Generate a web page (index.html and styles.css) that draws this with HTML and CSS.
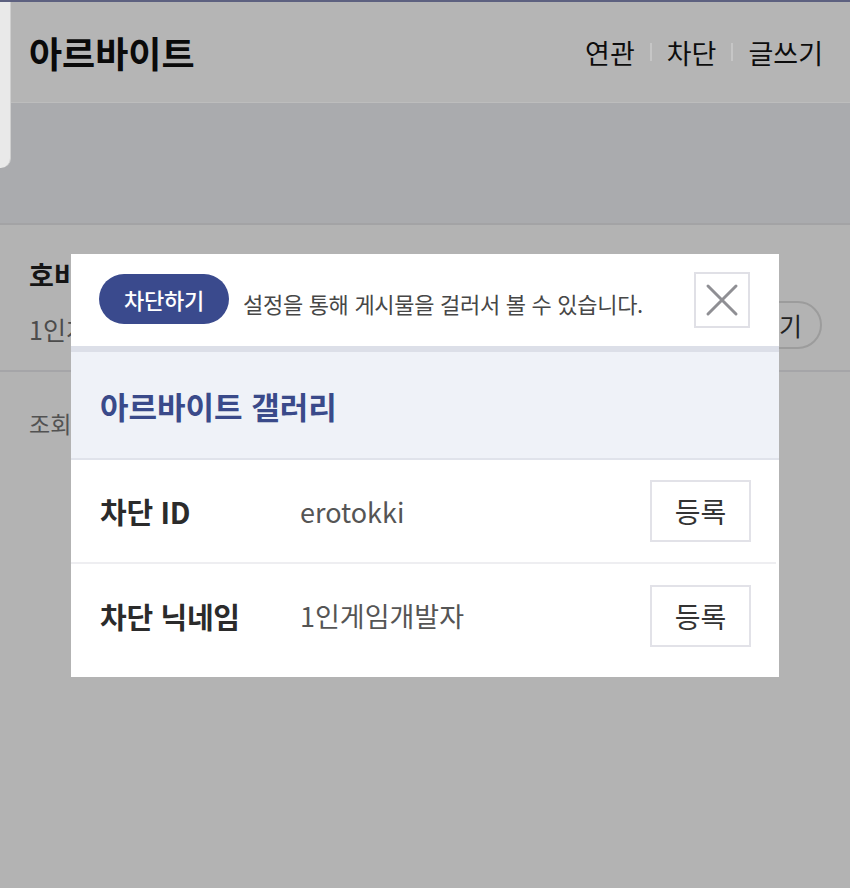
FILE: index.html
```html
<!DOCTYPE html>
<html lang="ko">
<head>
<meta charset="utf-8">
<link rel="stylesheet" href="styles.css">
</head>
<body>
<div class="page">
  <div class="topline"></div>
  <header class="appbar">
    <h1 class="title">아르바이트</h1>
    <nav class="nav">
      <span>연관</span><i class="sep"></i><span>차단</span><i class="sep"></i><span>글쓰기</span>
    </nav>
  </header>
  <div class="band"></div>
  <section class="post">
    <div class="post-head">
      <div class="post-info">
        <div class="post-title">호비 게임 만드는 중</div>
        <div class="post-writer">1인게임개발자</div>
      </div>
      <span class="post-btn">구독하기</span>
    </div>
  </section>
  <div class="post-meta">조회 123</div>
  <div class="sidepanel"></div>

  <div class="modal">
    <div class="modal-head">
      <span class="badge">차단하기</span>
      <span class="desc">설정을 통해 게시물을 걸러서 볼 수 있습니다.</span>
      <button class="close" aria-label="닫기">
        <svg width="34" height="34" viewBox="0 0 34 34"><path d="M3 3L31 31M31 3L3 31" stroke="#8f8f94" stroke-width="3" stroke-linecap="round"/></svg>
      </button>
    </div>
    <div class="gallery">아르바이트 갤러리</div>
    <div class="row">
      <span class="label">차단 ID</span>
      <span class="value">erotokki</span>
      <button class="reg">등록</button>
    </div>
    <div class="row last">
      <span class="label">차단 닉네임</span>
      <span class="value">1인게임개발자</span>
      <button class="reg">등록</button>
    </div>
  </div>
</div>
</body>
</html>
```
FILE: styles.css
```css
* { box-sizing: border-box; }
html, body { margin: 0; padding: 0; }
body {
  background: #b3b3b3;
  font-family: "Noto Sans CJK KR", "Noto Sans", sans-serif;
  width: 850px;
  height: 888px;
  overflow: hidden;
}
.page { position: relative; width: 850px; height: 888px; }
.topline { height: 2px; background: #5d6180; }
.appbar {
  height: 101px;
  background: #b5b5b5;
  border-bottom: 1px solid #bdbdbd;
  display: flex;
  align-items: center;
  justify-content: space-between;
  padding: 0 27px 0 29px;
}
.title {
  margin: 0;
  font-size: 36px;
  font-weight: 700;
  color: #0a0a0a;
}
.nav {
  display: flex;
  align-items: center;
  gap: 15px;
  font-size: 27px;
  color: #0d0d0d;
}
.nav .sep { width: 2px; height: 18px; background: #c6c6c6; display: block; }
.band {
  height: 122px;
  background: #aaabae;
  border-bottom: 2px solid #a3a3a5;
}
.post { border-bottom: 2px solid #a5a5a8; padding: 33px 28px 24px 29px; }
.post-head { display: flex; align-items: flex-end; justify-content: space-between; }
.post-title { font-size: 27px; font-weight: 700; color: #151515; line-height: 34px; }
.post-writer { font-size: 25px; color: #4c4c4c; line-height: 34px; margin-top: 20px; }
.post-btn {
  border: 2px solid #9c9c9c;
  border-radius: 26px;
  height: 48px;
  padding: 0 18px;
  display: flex;
  align-items: center;
  font-size: 25px;
  color: #222;
  margin-bottom: -3px;
}
.post-meta { padding: 34px 29px; font-size: 23px; color: #525252; }
.sidepanel {
  position: absolute;
  top: 2px;
  left: 0;
  width: 11px;
  height: 166px;
  background: #e9e9e9;
  border-bottom-right-radius: 10px;
  border-right: 1px solid #cfcfcf;
}
.modal {
  position: absolute;
  top: 254px;
  left: 71px;
  width: 708px;
  background: #ffffff;
  padding-bottom: 10px;
}
.modal-head {
  height: 98px;
  display: flex;
  align-items: center;
  padding: 0 28px 0 28px;
  border-bottom: 6px solid #dcdfe8;
}
.badge {
  background: #3a4a8d;
  color: #fff;
  font-size: 22px;
  font-weight: 500;
  height: 50px;
  width: 130px;
  border-radius: 25px;
  display: flex;
  align-items: center;
  justify-content: center;
  letter-spacing: -0.3px;
  margin-top: -2px;
}
.desc {
  margin-left: 14px;
  font-size: 22px;
  color: #474747;
  letter-spacing: -0.3px;
  flex: 1;
  padding-top: 6px;
}
.close {
  width: 56px;
  height: 56px;
  border: 2px solid #e0e0e6;
  background: #fff;
  display: flex;
  align-items: center;
  justify-content: center;
  padding: 0;
  margin-right: 1px;
}
.gallery {
  height: 108px;
  background: #eff2f8;
  border-bottom: 2px solid #e0e3eb;
  display: flex;
  align-items: center;
  padding-left: 29px;
  font-size: 31px;
  font-weight: 700;
  color: #3a4a8a;
}
.row {
  height: 104px;
  display: flex;
  align-items: center;
  padding: 0 28px 0 29px;
  border-bottom: 2px solid #eeeef1;
  margin-right: 3px;
}
.row.last { border-bottom: none; height: 103px; }
.label {
  width: 200px;
  font-size: 29px;
  font-weight: 700;
  color: #2b2b2b;
  letter-spacing: -0.3px;
}
.value {
  flex: 1;
  font-size: 27px;
  color: #555;
}
.reg {
  width: 101px;
  height: 62px;
  border: 2px solid #e2e2e8;
  background: #fff;
  font-family: inherit;
  font-size: 28px;
  color: #333;
  padding: 0;
  margin-right: -3px;
}
```
